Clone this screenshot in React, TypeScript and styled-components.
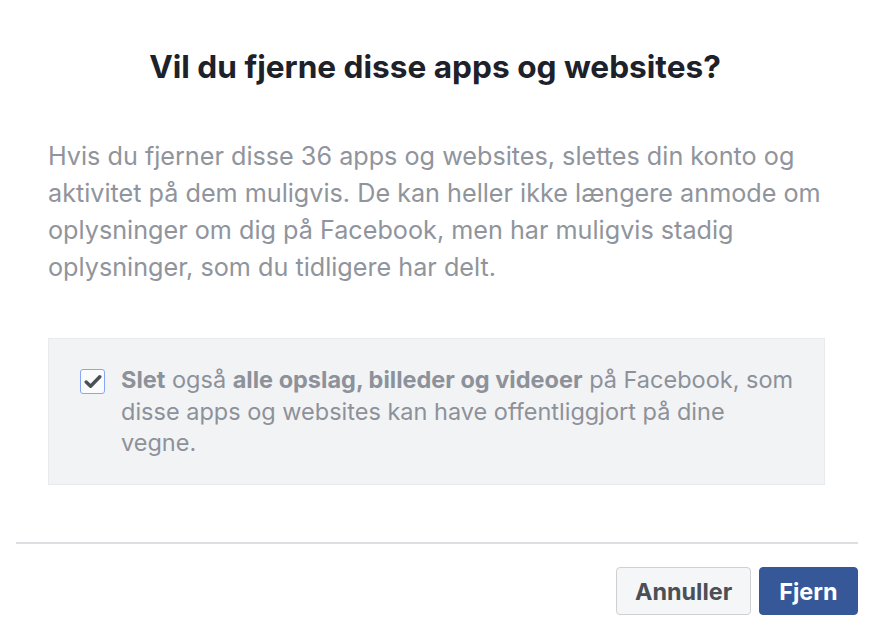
import React from "react";
import styled, { createGlobalStyle } from "styled-components";

const Global = createGlobalStyle`
  html, body { margin: 0; padding: 0; background: #fff; }
  body { font-family: Inter, "Noto Sans", "Liberation Sans", sans-serif; -webkit-font-smoothing: antialiased; }
`;

const Dialog = styled.div`
  width: 870px;
  height: 632px;
  display: flex;
  flex-direction: column;
  box-sizing: border-box;
  overflow: hidden;
`;

const Title = styled.h1`
  margin: 47px 0 0;
  text-align: center;
  font-size: 31.6px;
  line-height: 40px;
  font-weight: 700;
  color: #1d2129;
  white-space: nowrap;
`;

const Body = styled.p`
  margin: 51px 10px 0 48px;
  font-size: 25.2px;
  line-height: 37px;
  color: #90949c;
  white-space: nowrap;
`;

const OptionBox = styled.div`
  margin: 52px 0 0 48px;
  width: 777px;
  height: 147px;
  box-sizing: border-box;
  background: #f2f3f5;
  border: 1px solid #e8ebee;
  display: flex;
  align-items: flex-start;
  gap: 16px;
  padding: 25px 10px 0 31px;
`;

const Check = styled.span`
  flex: none;
  margin-top: 5px;
  width: 25px;
  height: 25px;
  box-sizing: border-box;
  border: 1px solid #86a8f4;
  border-radius: 3px;
  background: #fafbfc;
  display: flex;
  align-items: center;
  justify-content: center;
`;

const OptionText = styled.div`
  font-size: 23.5px;
  line-height: 31.5px;
  color: #8d9199;
  white-space: nowrap;
  b { font-weight: 700; }
`;

const Divider = styled.hr`
  margin: 57px 12px 0 16px;
  border: 0;
  height: 2px;
  background: #dddfe2;
`;

const Footer = styled.div`
  display: flex;
  justify-content: flex-end;
  gap: 8px;
  padding: 23px 12px 0 0;
`;

const Button = styled.button<{ $primary?: boolean }>`
  height: 48px;
  box-sizing: border-box;
  border-radius: 4px;
  font-family: inherit;
  font-size: 23.4px;
  font-weight: 700;
  padding: 0 ${(p) => (p.$primary ? "19.5px" : "17.5px")};
  border: 1px solid ${(p) => (p.$primary ? "#365899" : "#ced0d4")};
  background: ${(p) => (p.$primary ? "#365899" : "#f5f6f7")};
  color: ${(p) => (p.$primary ? "#fff" : "#4b4f56")};
`;

export default function App() {
  return (
    <>
      <Global />
      <Dialog>
        <Title>Vil du fjerne disse apps og websites?</Title>
        <Body>
          Hvis du fjerner disse 36 apps og websites, slettes din konto og
          <br />
          aktivitet på dem muligvis. De kan heller ikke længere anmode om
          <br />
          oplysninger om dig på Facebook, men har muligvis stadig
          <br />
          oplysninger, som du tidligere har delt.
        </Body>
        <OptionBox>
          <Check>
            <svg width="18" height="15" viewBox="0 0 18 15">
              <path d="M2.2 8 L6.6 12.2 L15.8 2.8" fill="none" stroke="#4b4f56" strokeWidth="3.4" strokeLinecap="round" strokeLinejoin="round" />
            </svg>
          </Check>
          <OptionText>
            <b>Slet</b> også <b>alle opslag, billeder og videoer</b> på Facebook, som
            <br />
            disse apps og websites kan have offentliggjort på dine
            <br />
            vegne.
          </OptionText>
        </OptionBox>
        <Divider />
        <Footer>
          <Button>Annuller</Button>
          <Button $primary>Fjern</Button>
        </Footer>
      </Dialog>
    </>
  );
}
